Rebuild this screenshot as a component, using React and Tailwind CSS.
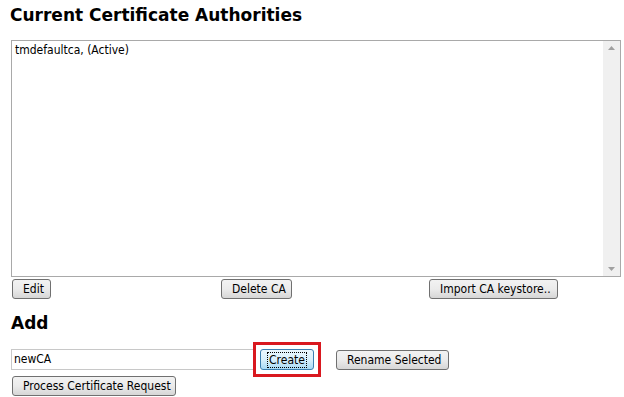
import React from "react";

const btn =
  "h-[20px] px-[10px] rounded-[3px] border border-[#707070] bg-gradient-to-b from-[#f2f2f2] via-[#ebebeb] to-[#d6d6d6] text-[12px] leading-none text-black whitespace-nowrap";

export default function App() {
  return (
    <div
      className="w-[624px] h-[397px] bg-white overflow-hidden text-black"
      style={{ fontFamily: '"DejaVu Sans Condensed", "DejaVu Sans", sans-serif' }}
    >
      <h1
        className="pl-[10px] pt-[4px] text-[17px] font-bold leading-[22px]"
        style={{ fontFamily: '"DejaVu Sans", Verdana, sans-serif' }}
      >
        Current Certificate Authorities
      </h1>
      <div className="ml-[11px] mt-[14px] w-[610px] h-[237px] border border-[#a9a9a9] flex">
        <div className="flex-1 pl-[3px] pt-[2px] text-[12px] leading-[15px]">
          tmdefaultca, (Active)
        </div>
        <div className="w-[17px] bg-[#f0f0f0] flex flex-col justify-between items-center py-[5px]">
          <svg width="7" height="4" viewBox="0 0 7 4">
            <path d="M0 4 L3.5 0 L7 4 Z" fill="#a0a0a0" />
          </svg>
          <svg width="7" height="4" viewBox="0 0 7 4">
            <path d="M0 0 L3.5 4 L7 0 Z" fill="#a0a0a0" />
          </svg>
        </div>
      </div>
      <div className="flex mt-[2px] pl-[12px]">
        <button className={`${btn} w-[39px]`}>Edit</button>
        <button className={`${btn} ml-[170px] w-[71px]`}>Delete CA</button>
        <button className={`${btn} ml-[137px] w-[129px]`}>Import CA keystore..</button>
      </div>
      <h2
        className="pl-[11px] mt-[13px] text-[17px] font-bold leading-[22px]"
        style={{ fontFamily: '"DejaVu Sans", Verdana, sans-serif' }}
      >
        Add
      </h2>
      <div className="flex items-center mt-[8px] pl-[11px]">
        <div className="w-[243px] h-[21px] border border-[#c8c8c8] border-r-0 pl-[2px] text-[12px] leading-[19px]">
          newCA
        </div>
        <div className="w-[68px] h-[35px] border-[3px] border-[#d9181f] flex items-center justify-center -ml-[1px]">
          <button className="h-[21px] w-[54px] rounded-[3px] border border-[#3c7fb1] bg-gradient-to-b from-[#eaf6fd] via-[#d9f0fc] to-[#a7d9f5] text-[12px] leading-none flex items-center justify-center">
            <span className="outline outline-1 outline-dotted outline-black px-[1px] leading-[14px]">Create</span>
          </button>
        </div>
        <button className={`${btn} ml-[15px] w-[113px]`}>Rename Selected</button>
      </div>
      <div className="pl-[12px] -mt-[4px]">
        <button className={`${btn} w-[164px]`}>Process Certificate Request</button>
      </div>
    </div>
  );
}
